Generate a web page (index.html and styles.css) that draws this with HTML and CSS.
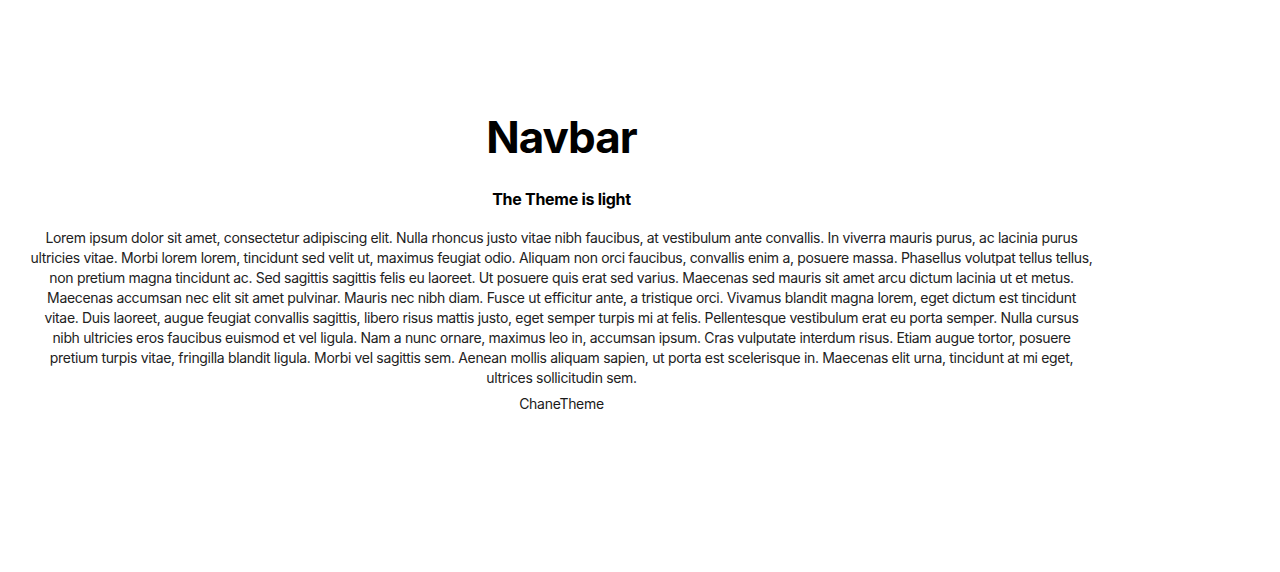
FILE: index.html
```html
<!DOCTYPE html>
<html lang="en">
<head>
<meta charset="utf-8">
<title>Navbar</title>
<link rel="stylesheet" href="styles.css">
</head>
<body>
<main class="page">
  <h1 class="title">Navbar</h1>
  <h2 class="subtitle">The Theme is light</h2>
  <p class="text">Lorem ipsum dolor sit amet, consectetur adipiscing elit. Nulla rhoncus justo vitae nibh faucibus, at vestibulum ante convallis. In viverra mauris purus, ac lacinia purus ultricies vitae. Morbi lorem lorem, tincidunt sed velit ut, maximus feugiat odio. Aliquam non orci faucibus, convallis enim a, posuere massa. Phasellus volutpat tellus tellus, non pretium magna tincidunt ac. Sed sagittis sagittis felis eu laoreet. Ut posuere quis erat sed varius. Maecenas sed mauris sit amet arcu dictum lacinia ut et metus. Maecenas accumsan nec elit sit amet pulvinar. Mauris nec nibh diam. Fusce ut efficitur ante, a tristique orci. Vivamus blandit magna lorem, eget dictum est tincidunt vitae. Duis laoreet, augue feugiat convallis sagittis, libero risus mattis justo, eget semper turpis mi at felis. Pellentesque vestibulum erat eu porta semper. Nulla cursus nibh ultricies eros faucibus euismod et vel ligula. Nam a nunc ornare, maximus leo in, accumsan ipsum. Cras vulputate interdum risus. Etiam augue tortor, posuere pretium turpis vitae, fringilla blandit ligula. Morbi vel sagittis sem. Aenean mollis aliquam sapien, ut porta est scelerisque in. Maecenas elit urna, tincidunt at mi eget, ultrices sollicitudin sem.</p>
  <button class="toggle" type="button">ChaneTheme</button>
</main>
</body>
</html>
```
FILE: styles.css
```css
html, body {
  margin: 0;
  padding: 0;
  background: #ffffff;
}
body {
  font-family: Inter, "Noto Sans", sans-serif;
  color: #1a1a1a;
}
.page {
  width: 1123px;
  box-sizing: border-box;
  padding: 109px 30px 0;
  display: flex;
  flex-direction: column;
  align-items: center;
  text-align: center;
}
.title {
  margin: 0;
  font-size: 44px;
  font-weight: 700;
  line-height: 56px;
  letter-spacing: -1px;
  color: #000;
}
.subtitle {
  margin: 24px 0 0;
  font-size: 16px;
  font-weight: 700;
  line-height: 20px;
  letter-spacing: -0.28px;
  color: #000;
}
.text {
  margin: 19px 0 0;
  font-size: 14px;
  line-height: 20px;
  letter-spacing: -0.33px;
  color: #222;
}
.toggle {
  margin-top: 6px;
  border: none;
  background: transparent;
  padding: 0;
  font-family: inherit;
  font-size: 14px;
  line-height: 20px;
  letter-spacing: -0.3px;
  color: #1a1a1a;
}
```
